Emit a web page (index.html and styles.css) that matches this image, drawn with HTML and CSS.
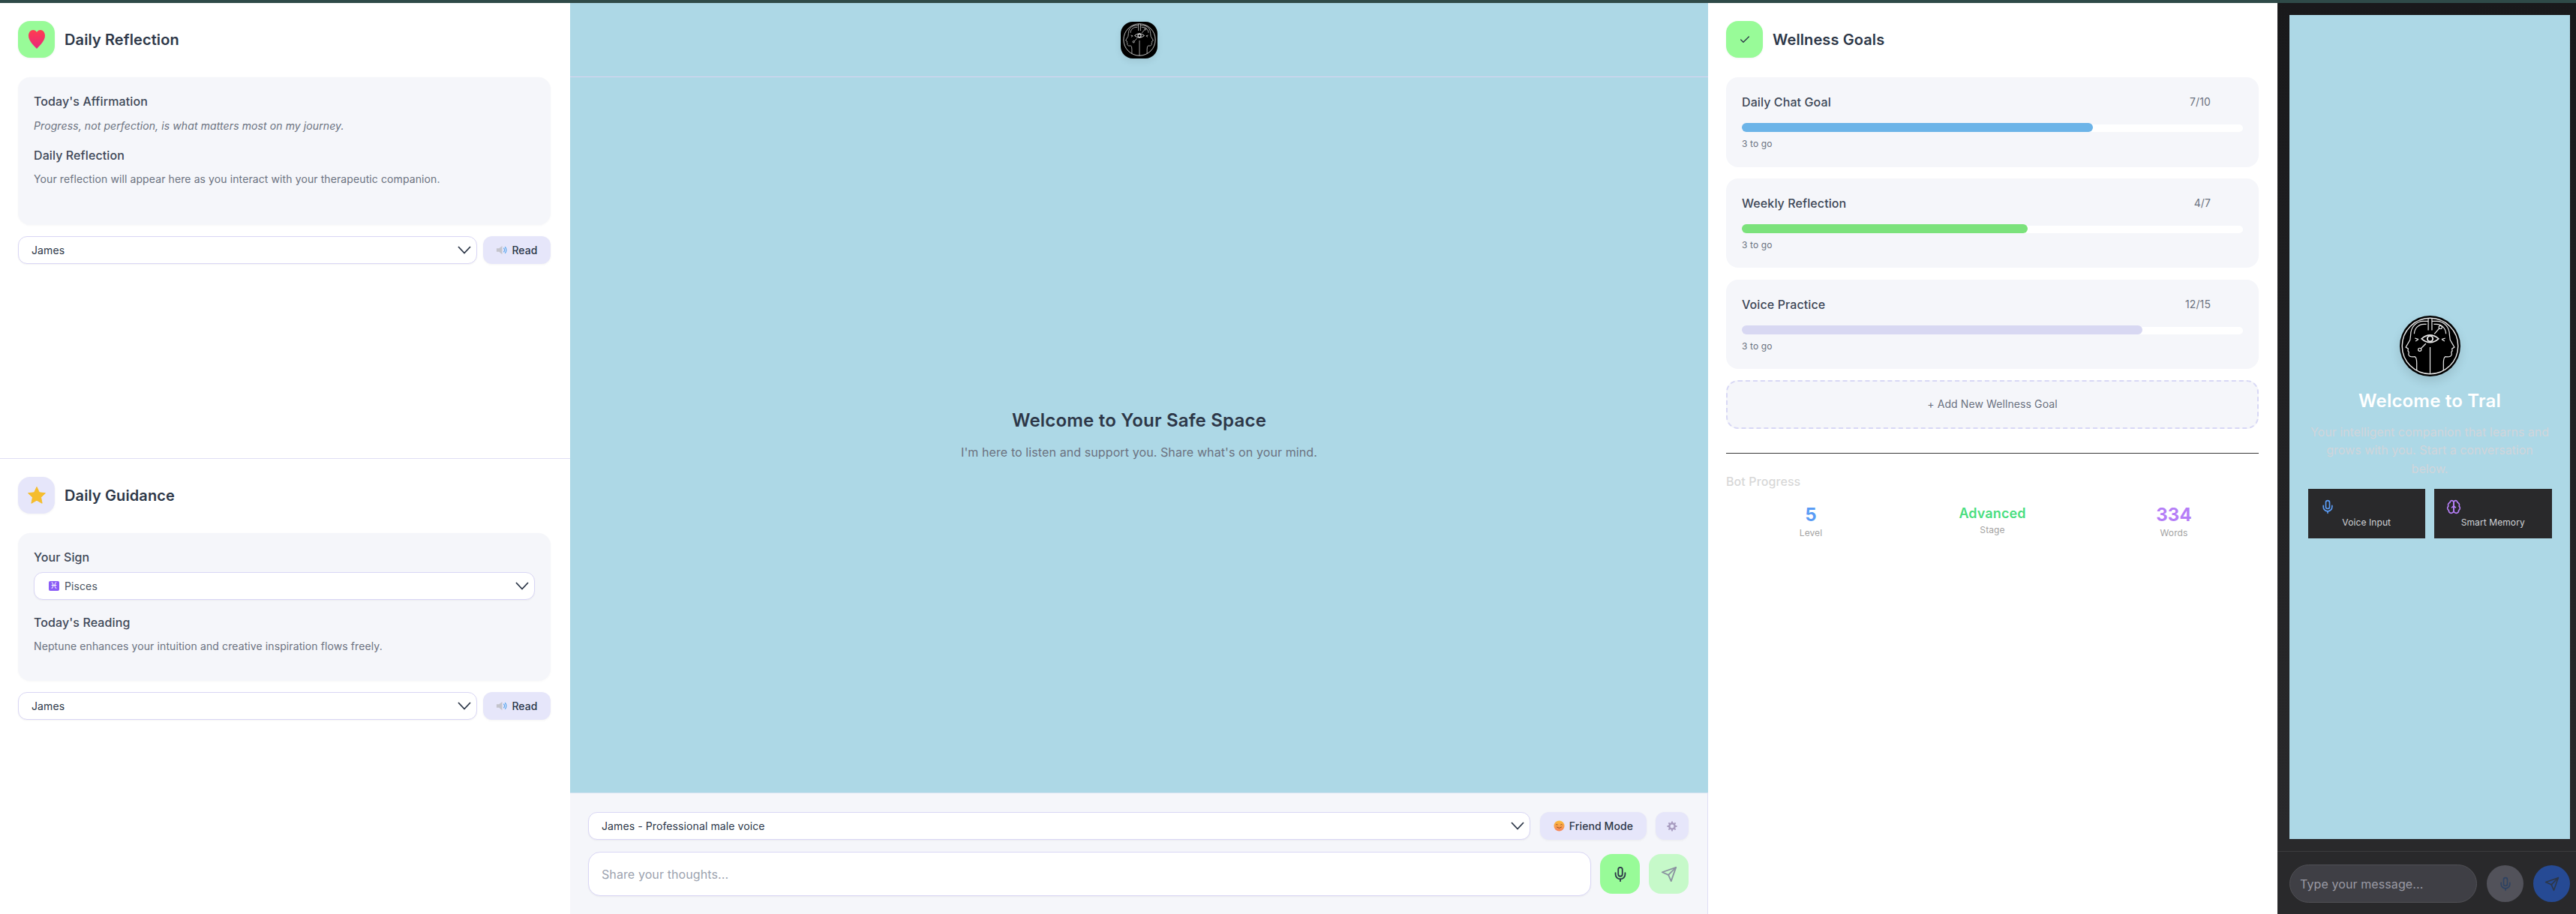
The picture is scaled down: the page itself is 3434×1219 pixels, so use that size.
FILE: index.html
```html
<!DOCTYPE html>
<html lang="en">
<head>
    <meta charset="UTF-8">
    <meta name="viewport" content="width=device-width, initial-scale=1.0">
    <title>Tral</title>
    <link rel="stylesheet" href="styles.css">
</head>
<body>
    <svg class="defs" width="0" height="0">
        <symbol id="chevron" viewBox="0 0 18 11"><path d="M1 1l8 8.5L17 1" fill="none" stroke="currentColor" stroke-width="1.8"/></symbol>
        <symbol id="mic" viewBox="0 0 24 24"><g fill="none" stroke="currentColor" stroke-width="2" stroke-linecap="round" stroke-linejoin="round"><path d="M12 2a3 3 0 0 0-3 3v7a3 3 0 0 0 6 0V5a3 3 0 0 0-3-3Z"/><path d="M19 10v2a7 7 0 0 1-14 0v-2"/><path d="M12 19v3"/></g></symbol>
        <symbol id="send" viewBox="0 0 24 24"><g fill="none" stroke="currentColor" stroke-width="2" stroke-linecap="round" stroke-linejoin="round"><path d="m22 2-7 20-4-9-9-4Z"/><path d="M22 2 11 13"/></g></symbol>
        <symbol id="speaker" viewBox="0 0 16 16"><path d="M1 5.500h3.500L9 2v12l-4.500-3.500H1Z" fill="#c4c4cc"/><path d="M11 5a4 4 0 0 1 0 6M13 3.500a6.500 6.500 0 0 1 0 9" fill="none" stroke="#5aa7ee" stroke-width="1.300"/></symbol>
        <symbol id="logo" viewBox="0 0 100 100">
            <g fill="none" stroke="#e8e8e8" stroke-width="1.500">
                <circle cx="50" cy="50" r="46" stroke-width="1.800"/>
                <path d="M47 4V24M53 4V24M50 52V96"/>
                <g id="logo-head">
                    <path d="M47 9H39C27 9 18 19 18 32L17 40 10 52 14 54.500 13.500 58 15 60 14.500 64Q16 69 25 67.500 28 69 28 78V90"/>
                    <path d="M44 14H40C30 14 24 22 24 30"/>
                    <path d="M25 37l6 2M26 42l4-2.500"/>
                </g>
                <use href="#logo-head" transform="matrix(-1 0 0 1 100 0)"/>
                <path d="M36 38Q50 26 64 38 50 50 36 38Z" stroke-width="2"/>
                <circle cx="50" cy="38" r="4.500" stroke-width="2.400"/>
                <path d="M57 30 65 21M43 46 35 54"/>
                <circle cx="67" cy="19" r="2.600"/>
                <circle cx="33" cy="56" r="2.600"/>
            </g>
        </symbol>
    </svg>

    <div class="topbar"></div>

    <div class="app">
        <aside class="left-col">
            <section class="panel panel-divided">
                <div class="panel-head">
                    <div class="head-icon green">
                        <svg width="22" height="26" viewBox="0 0 22 26"><defs><linearGradient id="heartFill" x1="0" y1="0" x2="0" y2="1"><stop offset="0" stop-color="#ff3d50"/><stop offset="1" stop-color="#e8277c"/></linearGradient></defs><path d="M11 25C6 20 0 14 0 7.500 0 3 3 0 6 0c2.300 0 4 1.200 5 3 1-1.800 2.700-3 5-3 3 0 6 3 6 7.500C22 14 16 20 11 25Z" fill="url(#heartFill)"/></svg>
                    </div>
                    <h2>Daily Reflection</h2>
                </div>
                <div class="card">
                    <h3>Today's Affirmation</h3>
                    <p class="italic">Progress, not perfection, is what matters most on my journey.</p>
                    <h3 class="next">Daily Reflection</h3>
                    <p>Your reflection will appear here as you interact with your therapeutic companion.</p>
                </div>
                <div class="voice-row">
                    <div class="select"><span>James</span><svg class="chev"><use href="#chevron"/></svg></div>
                    <button class="read-btn"><svg width="15" height="15"><use href="#speaker"/></svg>Read</button>
                </div>
            </section>

            <section class="panel">
                <div class="panel-head">
                    <div class="head-icon lavender">
                        <svg width="24" height="24" viewBox="0 0 24 24"><path d="M12 .5l3.400 7.300 8 1-5.900 5.400 1.600 8-7.100-4-7.100 4 1.600-8L.6 8.800l8-1Z" fill="#f5bd2e" stroke="#f5bd2e" stroke-linejoin="round"/></svg>
                    </div>
                    <h2>Daily Guidance</h2>
                </div>
                <div class="card">
                    <h3 class="sign-label">Your Sign</h3>
                    <div class="select select-sign"><span class="zodiac">♓</span><span>Pisces</span><svg class="chev"><use href="#chevron"/></svg></div>
                    <h3 class="next">Today's Reading</h3>
                    <p>Neptune enhances your intuition and creative inspiration flows freely.</p>
                </div>
                <div class="voice-row">
                    <div class="select"><span>James</span><svg class="chev"><use href="#chevron"/></svg></div>
                    <button class="read-btn"><svg width="15" height="15"><use href="#speaker"/></svg>Read</button>
                </div>
            </section>
        </aside>

        <main class="chat">
            <header class="chat-head">
                <div class="chat-logo"><svg width="46" height="46"><use href="#logo"/></svg></div>
            </header>
            <div class="chat-empty">
                <h1>Welcome to Your Safe Space</h1>
                <p>I'm here to listen and support you. Share what's on your mind.</p>
            </div>
            <footer class="composer">
                <div class="composer-top">
                    <div class="select select-voice"><span>James - Professional male voice</span><svg class="chev"><use href="#chevron"/></svg></div>
                    <button class="mode-btn">
                        <svg width="15" height="15" viewBox="0 0 16 16"><defs><linearGradient id="smileFill" x1="0" y1="0" x2="0" y2="1"><stop offset="0" stop-color="#fbbf3c"/><stop offset="1" stop-color="#f7825a"/></linearGradient></defs><circle cx="8" cy="8" r="7.500" fill="url(#smileFill)"/><path d="M3.500 6.500q1.200-1.300 2.400 0M10 6.500q1.200-1.300 2.400 0M4.500 9.500q3.500 3.200 7 0" fill="none" stroke="#8a4a1c" stroke-width="1"/></svg>
                        Friend Mode
                    </button>
                    <button class="gear-btn">
                        <svg width="14" height="14" viewBox="0 0 16 16"><circle cx="8" cy="8" r="4.200" fill="none" stroke="#a89cc0" stroke-width="2.800"/><path d="M8 .5v3M8 12.500v3M.5 8h3M12.500 8h3M2.700 2.700l2.100 2.100M11.200 11.200l2.100 2.100M2.700 13.300l2.100-2.100M11.200 4.800l2.100-2.100" stroke="#a89cc0" stroke-width="2.200"/></svg>
                    </button>
                </div>
                <div class="composer-bottom">
                    <div class="chat-input">Share your thoughts...</div>
                    <button class="square-btn mic-btn"><svg width="22" height="22"><use href="#mic"/></svg></button>
                    <button class="square-btn send-btn"><svg width="22" height="22"><use href="#send"/></svg></button>
                </div>
            </footer>
        </main>

        <aside class="right-col">
            <div class="panel-head">
                <div class="head-icon green">
                    <svg width="16" height="16" viewBox="0 0 24 24"><path d="M20 6 9 17l-5-5" fill="none" stroke="#2d3748" stroke-width="2" stroke-linecap="round" stroke-linejoin="round"/></svg>
                </div>
                <h2>Wellness Goals</h2>
            </div>

            <div class="goals">
                <div class="goal">
                    <div class="goal-row"><span class="goal-name">Daily Chat Goal</span><span class="goal-value">7/10</span></div>
                    <div class="track"><div class="fill fill-blue" style="width: 70%"></div></div>
                    <div class="goal-note">3 to go</div>
                </div>
                <div class="goal">
                    <div class="goal-row"><span class="goal-name">Weekly Reflection</span><span class="goal-value">4/7</span></div>
                    <div class="track"><div class="fill fill-green" style="width: 57.1%"></div></div>
                    <div class="goal-note">3 to go</div>
                </div>
                <div class="goal">
                    <div class="goal-row"><span class="goal-name">Voice Practice</span><span class="goal-value">12/15</span></div>
                    <div class="track"><div class="fill fill-lavender" style="width: 80%"></div></div>
                    <div class="goal-note">3 to go</div>
                </div>
            </div>

            <button class="add-goal">+ Add New Wellness Goal</button>

            <div class="bot-progress">
                <h4>Bot Progress</h4>
                <div class="stats">
                    <div class="stat"><div class="stat-num blue">5</div><div class="stat-label">Level</div></div>
                    <div class="stat"><div class="stat-num stat-word green-text">Advanced</div><div class="stat-label">Stage</div></div>
                    <div class="stat"><div class="stat-num purple">334</div><div class="stat-label">Words</div></div>
                </div>
            </div>
        </aside>

        <aside class="tral">
            <div class="tral-screen">
                <div class="tral-logo"><svg width="81" height="81"><use href="#logo"/></svg></div>
                <h2>Welcome to Tral</h2>
                <p>Your intelligent companion that learns and grows with you. Start a conversation below.</p>
                <div class="features">
                    <div class="feature">
                        <svg class="feature-icon blue" width="20" height="20"><use href="#mic"/></svg>
                        <span>Voice Input</span>
                    </div>
                    <div class="feature">
                        <svg class="feature-icon purple" width="20" height="20" viewBox="0 0 24 24"><g fill="none" stroke="currentColor" stroke-width="2" stroke-linecap="round" stroke-linejoin="round"><path d="M12 5a3 3 0 1 0-5.997.125 4 4 0 0 0-2.526 5.770 4 4 0 0 0 .556 6.588A4 4 0 1 0 12 18Z"/><path d="M12 5a3 3 0 1 1 5.997.125 4 4 0 0 1 2.526 5.770 4 4 0 0 1-.556 6.588A4 4 0 1 1 12 18Z"/><path d="M15 13a4.500 4.500 0 0 1-3-4 4.500 4.500 0 0 1-3 4"/><path d="M12 5v13"/></g></svg>
                        <span>Smart Memory</span>
                    </div>
                </div>
            </div>
            <div class="tral-composer">
                <div class="tral-input">Type your message...</div>
                <button class="round-btn round-mic"><svg width="20" height="20"><use href="#mic"/></svg></button>
                <button class="round-btn round-send"><svg width="20" height="20"><use href="#send"/></svg></button>
            </div>
        </aside>
    </div>
</body>
</html>
```

FILE: styles.css
```css
* {
    box-sizing: border-box;
}

body {
    font-family: Inter, "Liberation Sans", sans-serif;
    letter-spacing: 0.1px;
    margin: 0;
    height: 100vh;
    display: flex;
    flex-direction: column;
    color: #2d3748;
    background-color: white;
    overflow: hidden;
}

h1, h2, h3, h4, p {
    margin: 0;
}

button {
    font-family: inherit;
    letter-spacing: inherit;
    border: none;
    padding: 0;
    cursor: pointer;
}

.defs {
    position: absolute;
}

.topbar {
    height: 4px;
    flex: none;
    background-color: #2f4a48;
}

.app {
    flex: 1;
    display: flex;
    min-height: 0;
}

/* left column */
.left-col {
    width: 760px;
    flex: none;
    display: flex;
    flex-direction: column;
}

.panel {
    flex: 1;
    padding: 24px 26px 24px 24px;
}

.panel-divided {
    border-bottom: 1px solid #e0def5;
}

.panel-head {
    display: flex;
    align-items: center;
    gap: 13px;
    margin-bottom: 26px;
}

.panel-head h2 {
    font-size: 20px;
    font-weight: 600;
    line-height: 28px;
}

.head-icon {
    width: 49px;
    height: 49px;
    border-radius: 16px;
    display: flex;
    align-items: center;
    justify-content: center;
    flex: none;
    box-shadow: 0 1px 3px rgba(0, 0, 0, 0.05);
}

.green {
    background-color: #98fb98;
}

.lavender {
    background-color: #e6e6fa;
}

.card {
    background-color: #f5f6fa;
    border-radius: 16px;
    padding: 20px 21px;
    min-height: 197px;
    box-shadow: 0 1px 3px rgba(0, 0, 0, 0.03);
}

.card h3 {
    font-size: 16px;
    font-weight: 500;
    line-height: 24px;
    color: #3d4757;
    margin-bottom: 10px;
}

.card p {
    font-size: 14px;
    line-height: 22px;
    color: #6b7280;
}

.card .italic {
    font-style: italic;
}

.card .next {
    margin-top: 16px;
    margin-bottom: 9px;
}

.card .sign-label {
    margin-bottom: 8px;
}

.select {
    height: 37px;
    flex: 1;
    display: flex;
    align-items: center;
    padding: 0 7px 0 17px;
    background-color: white;
    border: 1px solid #d9d6f5;
    border-radius: 12px;
    font-size: 14px;
    box-shadow: 0 1px 2px rgba(0, 0, 0, 0.05);
}

.select span {
    flex: none;
}

.chev {
    width: 18px;
    height: 11px;
    margin-left: auto;
    color: #2d3748;
}

.select-sign {
    padding-left: 19px;
    color: #4b5563;
}

.card .select-sign {
    margin-bottom: 18px;
}

.card .select-sign + .next {
    margin-top: 0;
}

.zodiac {
    width: 14px;
    height: 13px;
    margin-right: 7px;
    background-color: #8b5cf6;
    color: white;
    border-radius: 2px;
    font-family: "DejaVu Sans", sans-serif;
    font-size: 12px;
    line-height: 13px;
    text-align: center;
}

.voice-row {
    display: flex;
    gap: 8px;
    margin-top: 15px;
}

.read-btn {
    width: 90px;
    height: 37px;
    flex: none;
    display: flex;
    align-items: center;
    justify-content: center;
    gap: 6px;
    background-color: #e6e6fa;
    color: #2d3748;
    border-radius: 12px;
    font-size: 14px;
    font-weight: 500;
    box-shadow: 0 1px 3px rgba(0, 0, 0, 0.05);
}

/* chat */
.chat {
    width: 1517px;
    flex: none;
    display: flex;
    flex-direction: column;
    background-color: #add8e6;
}

.chat-head {
    height: 99px;
    flex: none;
    display: flex;
    align-items: center;
    justify-content: center;
    border-bottom: 1px solid #dcd4f0;
}

.chat-logo {
    width: 49px;
    height: 49px;
    border-radius: 16px;
    background-color: black;
    display: flex;
    align-items: center;
    justify-content: center;
    box-shadow: 0 4px 10px rgba(0, 0, 0, 0.08);
}

.chat-empty {
    flex: 1;
    display: flex;
    flex-direction: column;
    align-items: center;
    justify-content: center;
}

.chat-empty h1 {
    font-size: 24px;
    font-weight: 600;
    letter-spacing: 0.2px;
    line-height: 32px;
    margin-bottom: 14px;
}

.chat-empty p {
    font-size: 16px;
    line-height: 24px;
    color: #6b7280;
}

.composer {
    height: 162px;
    flex: none;
    background-color: #f5f6fa;
    border-top: 1px solid #d5e2f0;
    border-right: 1px solid #e0def5;
    padding: 25px 25px 24px 24px;
}

.composer-top {
    display: flex;
    gap: 12px;
    margin-bottom: 16px;
}

.select-voice {
    margin-right: 1px;
    color: #2d3748;
}

.mode-btn {
    width: 142px;
    height: 37px;
    flex: none;
    display: flex;
    align-items: center;
    justify-content: center;
    gap: 6px;
    background-color: #e6e6fa;
    color: #2d3748;
    border-radius: 12px;
    font-size: 14px;
    font-weight: 500;
    box-shadow: 0 1px 3px rgba(0, 0, 0, 0.05);
}

.gear-btn {
    width: 44px;
    height: 37px;
    flex: none;
    display: flex;
    align-items: center;
    justify-content: center;
    background-color: #e6e6fa;
    border-radius: 12px;
    box-shadow: 0 1px 3px rgba(0, 0, 0, 0.05);
}

.composer-bottom {
    display: flex;
    align-items: center;
    gap: 12px;
}

.chat-input {
    flex: 1;
    height: 59px;
    display: flex;
    align-items: center;
    padding: 0 17px;
    background-color: white;
    border: 1px solid #d9d6f5;
    border-radius: 16px;
    font-size: 16px;
    color: #9ca3af;
    box-shadow: 0 1px 2px rgba(0, 0, 0, 0.05);
}

.square-btn {
    width: 53px;
    height: 53px;
    flex: none;
    display: flex;
    align-items: center;
    justify-content: center;
    border-radius: 16px;
}

.mic-btn {
    background-color: #98fb98;
    color: #2d3748;
}

.send-btn {
    background-color: #c6f9c9;
    color: #8b93a0;
}

/* right column */
.right-col {
    width: 759px;
    flex: none;
    padding: 24px 25px 24px 24px;
}

.goals {
    display: flex;
    flex-direction: column;
    gap: 15.300px;
}

.goal {
    height: 119.500px;
    background-color: #f5f6fa;
    border-radius: 16px;
    padding: 21.300px 21px 0;
}

.goal-row {
    display: flex;
    justify-content: space-between;
    padding-right: 43px;
    line-height: 24px;
    margin-bottom: 18px;
}

.goal-name {
    font-size: 16px;
    font-weight: 500;
    color: #3d4757;
}

.goal-value {
    font-size: 14px;
    color: #6b7280;
}

.track {
    height: 10px;
    background-color: white;
    border-radius: 6px;
}

.fill {
    height: 12px;
    position: relative;
    top: -2px;
    border-radius: 6px;
}

.fill-blue {
    background-color: #6cb4e8;
}

.fill-green {
    background-color: #7be27b;
}

.fill-lavender {
    background-color: #d8d8f2;
}

.goal-note {
    margin-top: 8px;
    font-size: 12px;
    line-height: 16px;
    color: #6b7280;
}

.add-goal {
    display: block;
    width: 100%;
    height: 65px;
    margin-top: 15px;
    padding-bottom: 2px;
    background-color: #f5f6fa;
    border: 2px dashed #d8d8f5;
    border-radius: 16px;
    font-size: 14px;
    color: #6b7280;
}

.bot-progress {
    margin-top: 32px;
    padding-top: 25px;
    border-top: 1px solid #3a3a3a;
}

.bot-progress h4 {
    font-size: 16px;
    font-weight: 500;
    line-height: 24px;
    color: #d8d8d8;
    margin-bottom: 17px;
}

.stats {
    display: grid;
    grid-template-columns: repeat(3, 1fr);
    gap: 16px;
    text-align: center;
}

.stat-num {
    font-size: 24px;
    font-weight: 700;
    line-height: 32px;
}

.stat-word {
    font-size: 18px;
    font-weight: 600;
    line-height: 28px;
}

.stat-label {
    font-size: 12px;
    line-height: 16px;
    color: #a3a3a3;
}

.blue {
    color: #5b9cf5;
}

.green-text {
    color: #4ade80;
}

.purple {
    color: #b57ef7;
}

/* tral preview */
.tral {
    width: 398px;
    flex: none;
    display: flex;
    flex-direction: column;
    background: linear-gradient(to bottom, #19191b, #29292b 90%);
    padding-top: 16px;
}

.tral-screen {
    flex: 1;
    margin: 0 8px 16px 16px;
    background-color: #add8e6;
    display: flex;
    flex-direction: column;
    align-items: center;
    justify-content: center;
}

.tral-logo {
    width: 81px;
    height: 81px;
    border-radius: 50%;
    background-color: black;
    box-shadow: 0 6px 14px rgba(0, 0, 0, 0.12);
    margin-bottom: 15px;
}

.tral-logo svg {
    display: block;
}

.tral-screen h2 {
    font-size: 24px;
    font-weight: 600;
    letter-spacing: 0.2px;
    line-height: 36px;
    color: white;
    margin-bottom: 11px;
}

.tral-screen p {
    width: 325px;
    font-size: 16px;
    letter-spacing: 0;
    line-height: 24.600px;
    color: #d1d5db;
    text-align: center;
    margin-bottom: 15px;
}

.features {
    width: 325px;
    display: grid;
    grid-template-columns: 1fr 1fr;
    gap: 12px;
}

.feature {
    height: 66px;
    background-color: #29292b;
    padding: 14px 16px 0;
    font-size: 12px;
    line-height: 16px;
    color: #cfd2d6;
    text-align: center;
}

.feature-icon {
    display: block;
    margin-bottom: 3px;
}

.tral-composer {
    height: 84px;
    flex: none;
    display: flex;
    align-items: center;
    gap: 13px;
    padding: 2px 8px 0 16px;
    border-top: 1px solid #3c3c3e;
    background-color: #29292b;
}

.tral-input {
    flex: 1;
    height: 51px;
    display: flex;
    align-items: center;
    padding: 0 13px;
    background-color: #3f3f45;
    border: 1px solid #505055;
    border-radius: 26px;
    font-size: 16px;
    color: #9a9aa4;
}

.round-btn {
    width: 49px;
    height: 49px;
    flex: none;
    display: flex;
    align-items: center;
    justify-content: center;
    border-radius: 50%;
}

.round-mic {
    background-color: #52525a;
    color: #2d4263;
}

.round-send {
    background-color: #264a94;
    color: #2d3748;
}
```
